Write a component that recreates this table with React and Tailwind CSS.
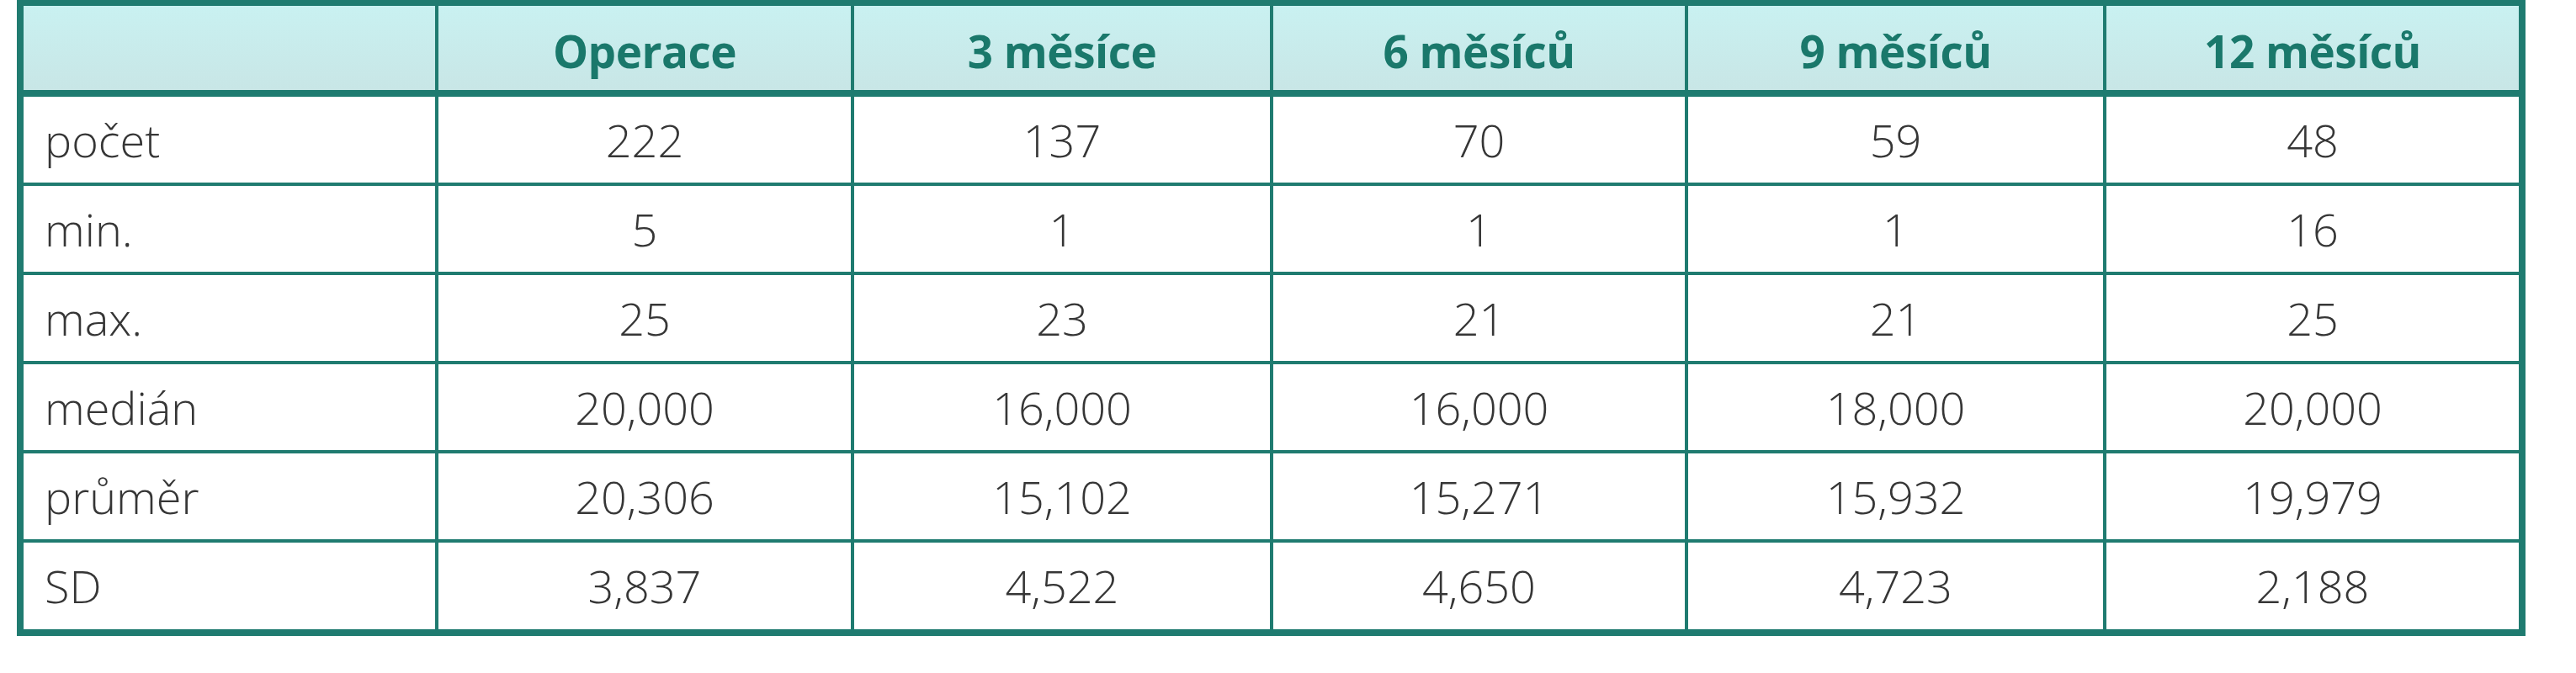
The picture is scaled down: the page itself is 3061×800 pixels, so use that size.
const columns = ["Operace", "3 měsíce", "6 měsíců", "9 měsíců", "12 měsíců"];

const rows = [
  ["počet", "222", "137", "70", "59", "48"],
  ["min.", "5", "1", "1", "1", "16"],
  ["max.", "25", "23", "21", "21", "25"],
  ["medián", "20,000", "16,000", "16,000", "18,000", "20,000"],
  ["průměr", "20,306", "15,102", "15,271", "15,932", "19,979"],
  ["SD", "3,837", "4,522", "4,650", "4,723", "2,188"],
];

const gridCols = "grid grid-cols-[489px_494px_498px_493px_497px_494px]";

export default function App() {
  return (
    <div className="h-[800px] w-[3061px] bg-white pl-[20px] font-['Open_Sans',sans-serif]">
      <div className="w-[2981px] border-x-8 border-t-[7px] border-b-8 border-[#1f7b70]">
        <div
          className={`${gridCols} h-[108px] border-b-8 border-[#1f7b70] bg-gradient-to-b from-[#c9f1f1] to-[#c8e6e6]`}
        >
          <div />
          {columns.map((c) => (
            <div
              key={c}
              className="flex items-center justify-center border-l-4 border-[#1f7b70] pt-[8px] text-[53px] font-bold tracking-[-0.5px] text-[#1a786b]"
            >
              {c}
            </div>
          ))}
        </div>
        {rows.map((r, i) => (
          <div
            key={r[0]}
            className={`${gridCols} ${
              i < rows.length - 1 ? "h-[106px] border-b-4" : "h-[103px]"
            } border-[#1f7b70]`}
          >
            {r.map((v, j) => (
              <div
                key={j}
                className={`flex items-center text-[54px] font-light text-[#363636] ${
                  j === 0 ? "pl-[25px]" : "justify-center border-l-4 border-[#1f7b70]"
                }`}
              >
                {v}
              </div>
            ))}
          </div>
        ))}
      </div>
    </div>
  );
}
